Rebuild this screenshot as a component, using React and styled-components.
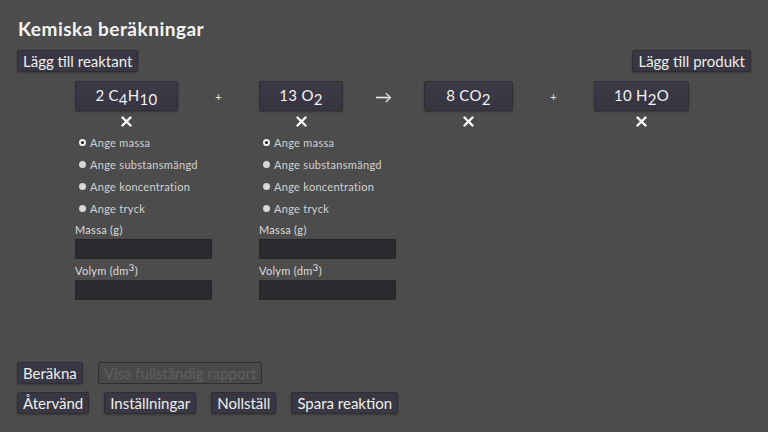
import styled, { createGlobalStyle } from 'styled-components';

const Global = createGlobalStyle`
  html, body {
    margin: 0;
    padding: 0;
    background: #4c4c4c;
  }
  body {
    font-family: Lato, 'Noto Sans', sans-serif;
    color: #ececec;
  }
`;

const Page = styled.div`
  width: 768px;
  height: 432px;
  box-sizing: border-box;
  padding: 17px 17px 18px;
  display: flex;
  flex-direction: column;
  overflow: hidden;
`;

const Title = styled.h1`
  margin: 0;
  padding-left: 1px;
  font-size: 19px;
  line-height: 24px;
  font-weight: 700;
  letter-spacing: 0.5px;
  color: #f4f4f4;
`;

const TopBar = styled.div`
  margin-top: 9px;
  display: flex;
  justify-content: space-between;
`;

const Button = styled.button`
  height: 22px;
  box-sizing: border-box;
  padding: 0 5px;
  border: 1px solid #2e2d33;
  border-radius: 2px;
  background: ${(p) => (p.disabled ? '#494949' : '#393743')};
  color: ${(p) => (p.disabled ? '#5f5f5f' : '#eeeeee')};
  font-family: inherit;
  font-size: 15px;
  line-height: 20px;
  letter-spacing: 0;
  white-space: nowrap;
  box-shadow: ${(p) => (p.disabled ? 'none' : '0 1px 2px rgba(0, 0, 0, 0.25)')};
`;

const Equation = styled.div`
  margin-top: 9px;
  padding-left: 58px;
  display: flex;
  align-items: flex-start;
`;

const Species = styled.div`
  width: ${(p) => p.$w}px;
  flex: none;
  display: flex;
  flex-direction: column;
  align-items: flex-start;
`;

const Formula = styled.div`
  width: 100%;
  height: 30px;
  box-sizing: border-box;
  border: 1px solid #2f2e35;
  border-radius: 2px;
  background: linear-gradient(#3c3a46, #363440);
  box-shadow: 0 1px 2px rgba(0, 0, 0, 0.3);
  display: flex;
  align-items: center;
  justify-content: center;
  font-size: 15px;
  letter-spacing: 0.3px;
  color: #f2f2f2;
  padding-bottom: 3px;

  sub {
    font-size: 15px;
    vertical-align: -4px;
    line-height: 0;
  }
`;

const Remove = styled.div`
  width: 100%;
  height: 20px;
  display: flex;
  align-items: center;
  justify-content: center;
`;

const Operator = styled.div`
  width: 81px;
  height: 30px;
  flex: none;
  display: flex;
  align-items: center;
  justify-content: center;
  font-size: ${(p) => (p.$arrow ? '17px' : '11px')};
  color: #e6e6e6;
`;

const Options = styled.div`
  margin-left: 4px;
  display: flex;
  flex-direction: column;
`;

const Option = styled.div`
  height: 22px;
  display: flex;
  align-items: center;
  gap: 4px;
  font-size: 11px;
  color: #d2d2d2;
  white-space: nowrap;
  letter-spacing: 0.3px;
`;

const Dot = styled.span`
  width: 7px;
  height: 7px;
  box-sizing: border-box;
  border-radius: 50%;
  background: ${(p) => (p.$on ? '#111' : '#d8d8d8')};
  border: ${(p) => (p.$on ? '2px solid #f2f2f2' : 'none')};
`;

const FieldLabel = styled.div`
  height: 20px;
  display: flex;
  align-items: center;
  font-size: 11px;
  color: #dcdcdc;
  white-space: nowrap;
  letter-spacing: 0.3px;

  sup {
    font-size: 10px;
    line-height: 0;
    vertical-align: 4px;
  }
`;

const Input = styled.div`
  width: 137px;
  height: 20px;
  box-sizing: border-box;
  margin-bottom: 1px;
  background: #2b2a2f;
  border: 1px solid #262529;
  border-radius: 1px;
`;

const Footer = styled.div`
  margin-top: auto;
  display: flex;
  flex-direction: column;
  gap: 8px;
`;

const ButtonRow = styled.div`
  display: flex;
  gap: 15px;
`;

const Cross = () => (
  <svg width="11" height="11" viewBox="0 0 11 11">
    <path d="M1.5 1.5 L9.5 9.5 M9.5 1.5 L1.5 9.5" stroke="#fafafa" strokeWidth="2.4" strokeLinecap="round" />
  </svg>
);

const SpeciesColumn = ({ width, children, form }) => (
  <Species $w={width}>
    <Formula>
      <span>{children}</span>
    </Formula>
    <Remove>
      <Cross />
    </Remove>
    {form && (
      <>
        <Options>
          <Option>
            <Dot $on />
            Ange massa
          </Option>
          <Option>
            <Dot />
            Ange substansmängd
          </Option>
          <Option>
            <Dot />
            Ange koncentration
          </Option>
          <Option>
            <Dot />
            Ange tryck
          </Option>
        </Options>
        <FieldLabel>
          <span>Massa (g)</span>
        </FieldLabel>
        <Input />
        <FieldLabel>
          <span>
            Volym (dm<sup>3</sup>)
          </span>
        </FieldLabel>
        <Input />
      </>
    )}
  </Species>
);

export default function App() {
  return (
    <>
      <Global />
      <Page>
        <Title>Kemiska beräkningar</Title>
        <TopBar>
          <Button>Lägg till reaktant</Button>
          <Button>Lägg till produkt</Button>
        </TopBar>
        <Equation>
          <SpeciesColumn width={103} form>
            2 C<sub>4</sub>H<sub>10</sub>
          </SpeciesColumn>
          <Operator>+</Operator>
          <SpeciesColumn width={84} form>
            13 O<sub>2</sub>
          </SpeciesColumn>
          <Operator $arrow>→</Operator>
          <SpeciesColumn width={89}>
            8 CO<sub>2</sub>
          </SpeciesColumn>
          <Operator>+</Operator>
          <SpeciesColumn width={95}>
            10 H<sub>2</sub>O
          </SpeciesColumn>
        </Equation>
        <Footer>
          <ButtonRow>
            <Button>Beräkna</Button>
            <Button disabled>Visa fullständig rapport</Button>
          </ButtonRow>
          <ButtonRow>
            <Button>Återvänd</Button>
            <Button>Inställningar</Button>
            <Button>Nollställ</Button>
            <Button>Spara reaktion</Button>
          </ButtonRow>
        </Footer>
      </Page>
    </>
  );
}
